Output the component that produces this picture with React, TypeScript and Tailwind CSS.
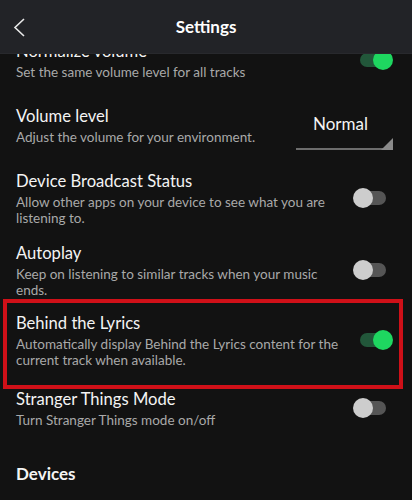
import React from "react";

function Toggle({ on }: { on: boolean }) {
  return (
    <div className="relative h-[20px] w-[40px] shrink-0">
      <div
        className={
          "absolute left-[7px] right-[7px] top-[3px] h-[14px] rounded-full " +
          (on ? "bg-[#22573a]" : "bg-[#555555]")
        }
      />
      <div
        className={
          "absolute top-0 h-[20px] w-[20px] rounded-full " +
          (on ? "right-0 bg-[#1ed760]" : "left-0 bg-[#cdcdcd]")
        }
      />
    </div>
  );
}

function Row({
  title,
  sub,
  on,
  className = "",
}: {
  title: string;
  sub: React.ReactNode;
  on: boolean;
  className?: string;
}) {
  return (
    <div className={"flex items-center pl-[16px] pr-[19px] " + className}>
      <div className="flex-1 pr-[6px]">
        <div className="text-[16.6px] leading-[22px] text-[#f4f4f4]">{title}</div>
        <div className="mt-[2px] text-[13.5px] leading-[16px] text-[#a9a9a9]">{sub}</div>
      </div>
      <Toggle on={on} />
    </div>
  );
}

export default function App() {
  return (
    <div className="h-[500px] w-[412px] overflow-hidden bg-[#121212] font-[Lato,sans-serif]">
      <div className="relative z-10 flex h-[54px] items-center justify-center border-b border-[#28292d] bg-[#222327]">
        <svg
          className="absolute left-[13px] top-[18px]"
          width="12"
          height="19"
          viewBox="0 0 12 19"
          fill="none"
        >
          <path d="M11 1 L2 9.5 L11 18" stroke="#e8e8e8" strokeWidth="1.6" strokeLinejoin="miter" />
        </svg>
        <div className="text-[17px] font-bold text-white">Settings</div>
      </div>

      <Row
        className="-mt-[22px] py-[8px]"
        title="Normalize volume"
        sub="Set the same volume level for all tracks"
        on={true}
      />

      <div className="flex items-start pl-[16px] pr-[19px] pt-[17px] pb-[12px]">
        <div className="flex-1">
          <div className="text-[16.6px] leading-[22px] text-[#f4f4f4]">Volume level</div>
          <div className="mt-[2px] text-[13.5px] leading-[16px] text-[#a9a9a9]">
            Adjust the volume for your environment.
          </div>
        </div>
        <div className="relative mt-[5px] h-[40px] w-[97px] shrink-0 border-b-2 border-[#6d6d6d] pl-[17px] pt-[3px]">
          <div className="text-[17px] leading-[22px] text-[#f4f4f4]">Normal</div>
          <svg className="absolute bottom-[-2px] right-0" width="12" height="12" viewBox="0 0 12 12">
            <polygon points="12,0 12,12 0,12" fill="#8a8a8a" />
          </svg>
        </div>
      </div>

      <Row
        className="py-[8px]"
        title="Device Broadcast Status"
        sub="Allow other apps on your device to see what you are listening to."
        on={false}
      />
      <Row
        className="py-[8px]"
        title="Autoplay"
        sub="Keep on listening to similar tracks when your music ends."
        on={false}
      />
      <div className="relative">
        <Row
          className="pt-[6px] pb-[12px]"
          title="Behind the Lyrics"
          sub="Automatically display Behind the Lyrics content for the current track when available."
          on={true}
        />
        <div className="pointer-events-none absolute -top-[7px] -bottom-[9px] left-[3px] right-[9px] border-4 border-[#cf1018]" />
      </div>
      <Row
        className="py-[8px]"
        title="Stranger Things Mode"
        sub="Turn Stranger Things mode on/off"
        on={false}
      />

      <div className="pl-[16px] pt-[27px] text-[17px] font-bold leading-[22px] text-[#f4f4f4]">
        Devices
      </div>
    </div>
  );
}
